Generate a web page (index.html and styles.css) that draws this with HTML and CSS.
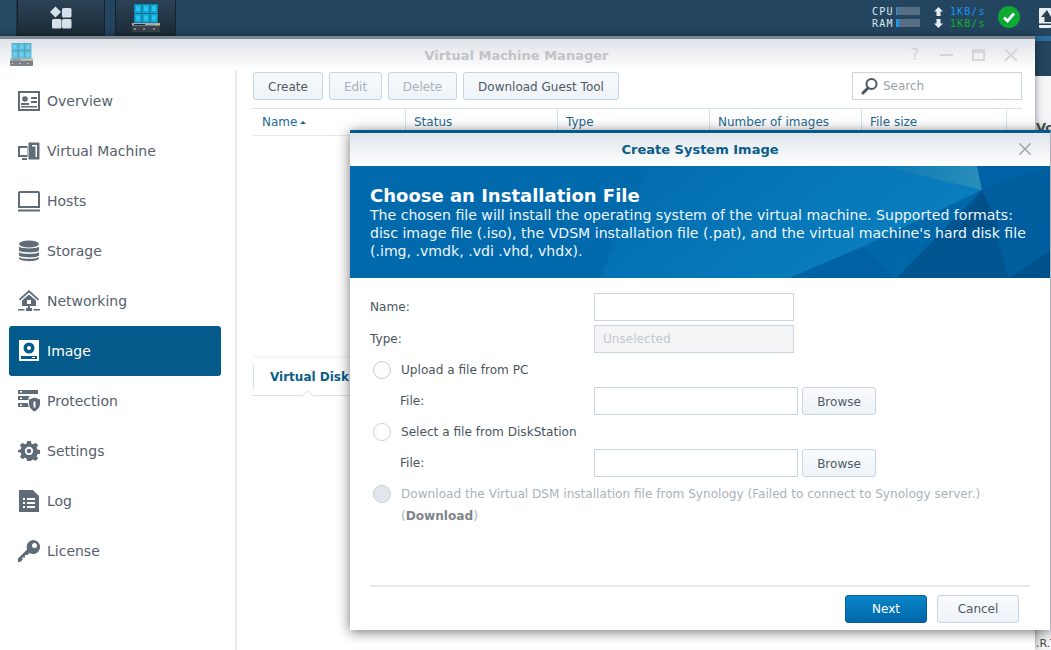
FILE: index.html
```html
<!DOCTYPE html>
<html lang="en">
<head>
<meta charset="utf-8">
<title>Virtual Machine Manager</title>
<link rel="stylesheet" href="styles.css">
</head>
<body>
<svg class="defs" width="0" height="0" aria-hidden="true">
  <defs>
    <symbol id="app" viewBox="0 0 28 28">
      <rect x="2" y="0" width="24" height="19" fill="#0b6f96"/>
      <g fill="#12a6d2">
        <rect x="2.500" y="0.500" width="7" height="8.500"/><rect x="10.500" y="0.500" width="7" height="8.500"/><rect x="18.500" y="0.500" width="7" height="8.500"/>
        <rect x="2.500" y="10" width="7" height="8.500"/><rect x="10.500" y="10" width="7" height="8.500"/><rect x="18.500" y="10" width="7" height="8.500"/>
      </g>
      <g fill="#27c3ea">
        <rect x="4" y="2" width="4" height="5"/><rect x="12" y="2" width="4" height="5"/><rect x="20" y="2" width="4" height="5"/>
        <rect x="4" y="11.500" width="4" height="5"/><rect x="12" y="11.500" width="4" height="5"/><rect x="20" y="11.500" width="4" height="5"/>
      </g>
      <rect x="0" y="19" width="28" height="9" rx="1" fill="#3b434a"/>
      <rect x="0" y="19" width="28" height="2.500" fill="#a4abb0"/>
      <rect x="2" y="20" width="11" height="1" fill="#23282c"/>
      <rect x="23" y="20" width="1.500" height="1.200" fill="#c9d23c"/><rect x="25.500" y="20" width="1.500" height="1.200" fill="#c9d23c"/>
      <rect x="2" y="24.500" width="2" height="1" fill="#c8cdd0"/><rect x="11" y="24.500" width="2" height="1" fill="#c8cdd0"/><rect x="21" y="24.500" width="2" height="1" fill="#c8cdd0"/>
    </symbol>
  </defs>
</svg>

<header class="taskbar">
  <div class="task-spacer"></div>
  <div class="task-tab task-main">
    <svg width="24" height="24" viewBox="0 0 24 24"><path fill="#d5e0e8" d="M6.500 0.500 12 6 6.500 11.500 1 6Z"/><rect x="13" y="2" width="9.500" height="9.500" rx="1.500" fill="#d5e0e8"/><rect x="3" y="13" width="9.500" height="9.500" rx="1.500" fill="#d5e0e8"/><rect x="13" y="13" width="9.500" height="9.500" rx="1.500" fill="#d5e0e8"/></svg>
  </div>
  <div class="task-tab task-app">
    <svg width="28" height="28"><use href="#app"/></svg>
  </div>
  <div class="tray">
    <div class="meters">
      <div class="meter"><span class="meter-name">CPU</span><span class="meter-bar"><i class="meter-fill fill-cpu"></i></span></div>
      <div class="meter"><span class="meter-name">RAM</span><span class="meter-bar"><i class="meter-fill fill-ram"></i></span></div>
    </div>
    <div class="rates">
      <div class="rate rate-up"><svg width="9" height="9" viewBox="0 0 9 9"><path fill="#e6edf2" d="M4.500 0 9 4.500H6.500V9h-4V4.500H0Z"/></svg><span>1KB/s</span></div>
      <div class="rate rate-down"><svg width="9" height="9" viewBox="0 0 9 9"><path fill="#e6edf2" d="M4.500 9 9 4.500H6.500V0h-4v4.500H0Z"/></svg><span>1KB/s</span></div>
    </div>
    <svg class="status" width="22" height="22" viewBox="0 0 22 22"><circle cx="11" cy="11" r="11" fill="#0ea835"/><path d="M6 11.500 9.500 15 16 7.500" fill="none" stroke="#fff" stroke-width="2.800"/></svg>
    <svg class="upload" width="12" height="20" viewBox="0 0 12 20"><rect width="12" height="20" rx="1" fill="#e8eef2"/><path fill="#2a3f52" d="M8 2 2 9h3.500v5H12V9h0Z"/><rect x="0" y="15.500" width="12" height="1.500" fill="#2a3f52"/></svg>
  </div>
</header>

<div class="back-window">
  <div class="back-head"></div>
  <div class="back-body"><span class="back-vo">Vo</span><span class="back-rt">.R.T</span></div>
</div>

<section class="window">
  <div class="win-head">
    <svg class="win-icon" width="23" height="23"><use href="#app"/></svg>
    <div class="win-title">Virtual Machine Manager</div>
    <div class="win-controls">
      <span class="win-help">?</span>
      <svg width="14" height="14" viewBox="0 0 14 14"><rect x="0" y="6" width="13" height="2" fill="#d3d6d9"/></svg>
      <svg width="14" height="14" viewBox="0 0 14 14"><path fill="none" stroke="#d3d6d9" stroke-width="2" d="M1 2h11v10H1z"/><rect x="1" y="2" width="11" height="3" fill="#d3d6d9"/></svg>
      <svg width="14" height="14" viewBox="0 0 14 14"><path stroke="#d3d6d9" stroke-width="1.800" d="M1 1 13 13M13 1 1 13"/></svg>
    </div>
  </div>
  <div class="win-body">
    <nav class="sidebar">
      <a class="nav-item">
        <svg class="nav-icon" viewBox="0 0 22 22"><path fill-rule="evenodd" d="M0 1h22v20H0Zm2 2v16h18V3Z"/><circle cx="7" cy="9" r="2.800"/><path d="M3 13h8v2H3zM13 7h6v2h-6zM13 11h6v2h-6zM3 16h16v1.500H3z"/></svg>
        <span>Overview</span></a>
      <a class="nav-item">
        <svg class="nav-icon" viewBox="0 0 22 22"><path fill-rule="evenodd" d="M0 6h11v11H0Zm2 2v7h7V8Z"/><path d="M4 18h5v2H4z"/><rect x="10" y="2" width="12" height="18" rx="1.500" stroke="#fff" stroke-width="1"/><rect x="14" y="5" width="5" height="1.500" fill="#fff"/><rect x="17.500" y="5" width="1.500" height="12" fill="#fff"/></svg>
        <span>Virtual Machine</span></a>
      <a class="nav-item">
        <svg class="nav-icon" viewBox="0 0 22 22"><path fill-rule="evenodd" d="M2 1h18a2 2 0 0 1 2 2v15H0V3a2 2 0 0 1 2-2Zm0 2v13h18V3Z"/><rect y="19.500" width="22" height="2"/></svg>
        <span>Hosts</span></a>
      <a class="nav-item">
        <svg class="nav-icon" viewBox="0 0 22 22"><ellipse cx="11" cy="4" rx="10" ry="3.500"/><path d="M1 6.500c2 2.500 18 2.500 20 0v4c-2 2.500-18 2.500-20 0ZM1 12c2 2.500 18 2.500 20 0v3.500c-2 2.500-18 2.500-20 0ZM1 17c2 2.500 18 2.500 20 0v1.500c-2 3.500-18 3.500-20 0Z"/></svg>
        <span>Storage</span></a>
      <a class="nav-item">
        <svg class="nav-icon" viewBox="0 0 22 22"><path fill-rule="evenodd" d="M11 0 21 9 20 10.500 11 2.500 2 10.500 1 9ZM11 4.500l7 6V16H4v-5.500ZM9 10v4h4v-4Z"/><path d="M10 16h2v2h-2zM0 19h6.500v1.500H0zM15.500 19H22v1.500h-6.500zM8 18h6v3H8z"/></svg>
        <span>Networking</span></a>
      <a class="nav-item is-active">
        <svg class="nav-icon" viewBox="0 0 22 22"><path fill="#fff" fill-rule="evenodd" d="M1 0h20v21H1Zm10 2.500a5.500 5.500 0 1 0 0 11 5.500 5.500 0 0 0 0-11ZM3 16v3h16v-3Z"/><circle cx="11" cy="8" r="2" fill="#fff"/><rect x="14" y="17" width="3" height="1" fill="#fff"/></svg>
        <span>Image</span></a>
      <a class="nav-item">
        <svg class="nav-icon" viewBox="0 0 22 22"><path fill-rule="evenodd" d="M0 0h20v4H0ZM0 6h12l-1.500 1.500V10H0Zm2 1.500v1.500h2V7.500ZM0 13h10v.5c0 1.500.4 2.700 1 3.500H0Zm2 1.500V16h2v-1.500ZM2 1v1.500h2V1Z"/><path fill-rule="evenodd" d="M16.500 7.500 22 9.500v4c0 4-2.800 6.500-5.500 8-2.700-1.500-5.500-4-5.500-8v-4Zm-1 4v6h2v-6Z"/></svg>
        <span>Protection</span></a>
      <a class="nav-item">
        <svg class="nav-icon" viewBox="-1 -1 24 24"><path fill-rule="evenodd" d="M9 0h4l.6 2.800 2.100.9L18.100 2l2.800 2.800-1.600 2.400.9 2.100 2.800.7v4l-2.800.6-.9 2.100 1.600 2.400-2.800 2.800-2.400-1.600-2.100.8L13 22H9l-.6-2.800-2.100-.9L3.900 20 1.100 17.200l1.600-2.400-.9-2.100L-1 12V10l2.800-.7.9-2.100L1.100 4.800 3.900 2l2.400 1.700 2.100-.9ZM11 6.500a4.500 4.500 0 1 0 0 9 4.500 4.500 0 0 0 0-9Z"/><circle cx="11" cy="11" r="2.500"/></svg>
        <span>Settings</span></a>
      <a class="nav-item">
        <svg class="nav-icon" viewBox="0 0 22 22"><path fill-rule="evenodd" d="M1 0h14l6 6v16H1Zm4 8v2h2V8Zm4 0v2h8V8Zm-4 4v2h2v-2Zm4 0v2h8v-2Zm-4 4v2h2v-2Zm4 0v2h8v-2Z"/></svg>
        <span>Log</span></a>
      <a class="nav-item">
        <svg class="nav-icon" viewBox="0 0 22 22"><path fill-rule="evenodd" d="M15 0a7 7 0 1 1-3.500 13L9.500 15H7v2.500H4.500V20L2 22H0v-3.500L9 9.500A7 7 0 0 1 15 0Zm1.500 3a2.500 2.500 0 1 0 0 5 2.500 2.500 0 0 0 0-5Z"/></svg>
        <span>License</span></a>
    </nav>
    <main class="content">
      <div class="toolbar">
        <button class="btn w-create">Create</button>
        <button class="btn btn-off w-edit">Edit</button>
        <button class="btn btn-off w-delete">Delete</button>
        <button class="btn w-guest">Download Guest Tool</button>
        <div class="search">
          <svg width="18" height="18" viewBox="0 0 18 18"><circle cx="10.500" cy="7" r="5" fill="none" stroke="#4d5762" stroke-width="2"/><path d="M7 11 2 16" stroke="#4d5762" stroke-width="3" stroke-linecap="round"/></svg>
          <span>Search</span>
        </div>
      </div>
      <div class="table-head">
        <div class="col col-name">Name <i class="sort"></i></div>
        <div class="col">Status</div>
        <div class="col">Type</div>
        <div class="col">Number of images</div>
        <div class="col">File size</div>
      </div>
      <div class="table-empty"></div>
      <div class="tabs">
        <div class="tab">Virtual Disk<i class="tab-notch"></i></div>
      </div>
    </main>
  </div>
</section>

<section class="dialog">
  <div class="dlg-head">
    <div class="dlg-title">Create System Image</div>
    <svg class="dlg-close" width="14" height="14" viewBox="0 0 14 14"><path stroke="#9aa1a6" stroke-width="1.500" d="M1.500 1.500 12.500 12.500M12.500 1.500 1.500 12.500"/></svg>
  </div>
  <div class="banner">
    <svg class="banner-art" viewBox="0 0 701 112" preserveAspectRatio="none" aria-hidden="true">
      <defs>
        <linearGradient id="glow" x1="0" y1="0" x2="1" y2="0.400"><stop offset="0" stop-color="#016aad"/><stop offset="1" stop-color="#0a80bf"/></linearGradient>
        <linearGradient id="ray" x1="0" y1="0" x2="1" y2="0"><stop offset="0" stop-color="#0a78b5"/><stop offset="1" stop-color="#2a8fb8"/></linearGradient>
      </defs>
      <polygon points="300,0 530,0 633,24 513,81 440,112 250,112" fill="url(#glow)"/>
      <polygon points="530,0 628,0 633,24" fill="url(#ray)"/>
      <polygon points="628,0 701,0 633,24" fill="#0062a4"/>
      <polygon points="633,24 701,0 701,112 660,112" fill="#005e9e"/>
      <polygon points="633,24 660,112 547,112" fill="#005590"/>
      <polygon points="633,24 547,112 513,81" fill="#0068a8"/>
      <polygon points="633,24 612,62 650,62" fill="#004a80" opacity=".6"/>
      <polygon points="513,81 547,112 440,112" fill="#0061a3"/>
      <polygon points="660,112 701,112 701,85" fill="#00528c"/>
    </svg>
    <h1 class="banner-title">Choose an Installation File</h1>
    <p class="banner-text">The chosen file will install the operating system of the virtual machine. Supported formats: disc image file (.iso), the VDSM installation file (.pat), and the virtual machine's hard disk file (.img, .vmdk, .vdi .vhd, vhdx).</p>
  </div>
  <form class="form">
    <div class="row"><label class="lbl">Name:</label><div class="input"></div></div>
    <div class="row"><label class="lbl">Type:</label><div class="input input-off">Unselected</div></div>
    <div class="radio-row"><i class="radio"></i><span>Upload a file from PC</span></div>
    <div class="row"><label class="lbl lbl-sub">File:</label><div class="input input-file"></div><button type="button" class="btn btn-browse">Browse</button></div>
    <div class="radio-row"><i class="radio"></i><span>Select a file from DiskStation</span></div>
    <div class="row"><label class="lbl lbl-sub">File:</label><div class="input input-file"></div><button type="button" class="btn btn-browse">Browse</button></div>
    <div class="radio-row radio-off"><i class="radio"></i><span>Download the Virtual DSM installation file from Synology (Failed to connect to Synology server.) (<b>Download</b>)</span></div>
  </form>
  <div class="dlg-foot">
    <button class="btn btn-primary">Next</button>
    <button class="btn btn-cancel">Cancel</button>
  </div>
</section>
</body>
</html>
```
FILE: styles.css
```css
* { box-sizing: border-box; }
html, body { margin: 0; height: 100%; }
body {
  position: relative;
  width: 1051px;
  height: 650px;
  overflow: hidden;
  background: #fff;
  font-family: "DejaVu Sans", sans-serif;
  font-size: 13px;
  color: #4a5560;
}
.defs { position: absolute; }

/* taskbar */
.taskbar {
  height: 36px;
  display: flex;
  background: #24455f;
}
.task-spacer { width: 17px; border-right: 1px solid #1c3346; background: #264a64; }
.task-tab {
  display: flex;
  align-items: center;
  justify-content: center;
  background: linear-gradient(#2b4256, #1c2b38);
  border-right: 1px solid #16232e;
  border-left: 1px solid #16232e;
  height: 36px;
}
.task-main { width: 88px; }
.task-app { width: 61px; margin-left: 10px; }
.tray { margin-left: auto; display: flex; align-items: center; height: 36px; padding-bottom: 2px; }
.meters { display: flex; flex-direction: column; gap: 3px; width: 48px; }
.meter { display: flex; align-items: center; height: 9px; }
.meter-name { width: 24px; font: 10px/9px "DejaVu Sans Mono", monospace; color: #dce6ee; letter-spacing: 1.200px; white-space: nowrap; }
.meter-bar { width: 24px; height: 8px; background: #566f84; display: block; }
.meter-fill { display: block; height: 8px; background: #1e95ea; }
.fill-cpu { width: 1px; }
.fill-ram { width: 3px; }
.rates { display: flex; flex-direction: column; gap: 3px; margin-left: 14px; width: 63px; }
.rate { display: flex; align-items: center; gap: 7px; height: 9px; font: 10px/9px "DejaVu Sans Mono", monospace; letter-spacing: 1.100px; }
.rate-up span { color: #1b93f0; }
.rate-down span { color: #14b02e; }
.status { margin-left: 1px; }
.upload { margin-left: 19px; margin-top: 1px; }

/* window behind */
.back-window {
  position: absolute;
  left: 1035px; top: 36px;
  width: 16px; height: 614px;
  display: flex; flex-direction: column;
}
.back-head { height: 40px; background: linear-gradient(#2d6c9c 0, #2d6c9c 5px, #24455f 5px); }
.back-body { flex: 1; position: relative; background: #f4f6f8; overflow: hidden; font-weight: 700; color: #444; }
.back-vo { position: absolute; left: 1px; top: 44px; color: #4a4f55; }
.back-rt { position: absolute; left: 1px; bottom: 0; font-weight: 400; font-size: 11px; line-height: 13px; }

/* main window */
.window {
  position: absolute;
  left: 0; top: 36px;
  width: 1035px; height: 614px;
  background: #fff;
  box-shadow: 0 0 8px rgba(0, 0, 0, .45);
  border-top: 3px solid #7c8893;
  display: flex;
  flex-direction: column;
}
.win-head {
  height: 32px;
  position: relative;
  display: flex;
  align-items: center;
  justify-content: center;
  padding-right: 2px;
  background: linear-gradient(#dfe3e8, #fff);
}
.win-icon { position: absolute; left: 10px; top: 4px; opacity: .65; }
.win-title { font-weight: 700; color: #c0c4c8; }
.win-controls {
  position: absolute; right: 17px; top: 9px;
  display: flex; gap: 18px; align-items: center;
}
.win-help { width: 14px; color: #d3d6d9; font-size: 16px; line-height: 14px; text-align: center; }
.win-body { flex: 1; display: flex; min-height: 0; }

/* sidebar */
.sidebar {
  width: 237px;
  padding: 5px 14px 0 9px;
  border-right: 2px solid #e6e9ec;
  display: flex;
  flex-direction: column;
}
.nav-item {
  height: 50px;
  display: flex;
  align-items: center;
  gap: 7px;
  padding-left: 9px;
  border-radius: 3px;
  font-size: 14px;
  color: #56616c;
}
.nav-icon { width: 22px; height: 22px; fill: #5f6b77; flex: none; overflow: visible; }
.is-active { background: #045a8a; color: #fff; }

/* content */
.content { flex: 1; padding: 0 13px 0 16px; display: flex; flex-direction: column; min-width: 0; }
.toolbar { display: flex; gap: 6px; height: 37px; padding-top: 1px; align-items: flex-start; }
.btn {
  height: 28px;
  padding: 1px 0 0;
  border: 1px solid #c5d5e2;
  border-radius: 3px;
  background: linear-gradient(#f8fafc, #eef3f8);
  font: 12px "DejaVu Sans", sans-serif;
  color: #4f5a65;
}
.btn-off { color: #aab2ba; }
.w-create { width: 70px; }
.w-edit { width: 53px; }
.w-delete { width: 69px; }
.w-guest { width: 156px; }
.search {
  margin-left: auto;
  width: 170px; height: 28px;
  border: 1px solid #c9d6e0;
  display: flex; align-items: center; gap: 4px;
  padding-left: 8px;
  font-size: 12px;
  color: #9aa3ab;
}
.table-head {
  display: grid;
  grid-template-columns: 153px 152px 152px 152px 145px;
  height: 28px;
  border-top: 1px solid #d5e2ec;
  border-bottom: 1px solid #e3e8ed;
  color: #1f6a94;
  font-size: 12px;
}
.col { padding-left: 8px; line-height: 26px; border-right: 1px solid #d5e2ec; }
.col-name { padding-left: 9px; }
.sort {
  display: inline-block;
  vertical-align: 2px;
  margin-left: -1px;
  border: 3px solid transparent;
  border-top: 0;
  border-bottom: 3px solid #1f6a94;
}
.table-empty { height: 222px; }
.tabs {
  height: 38px;
  box-shadow: 0 -2px 3px rgba(0, 0, 0, .05);
  border-bottom: 1px solid #dfe2e5;
  display: flex;
  align-items: center;
}
.tab {
  position: relative;
  height: 24px;
  display: flex; align-items: center;
  padding: 0 16px;
  border-left: 1px solid #d5e2ec;
  font-size: 12px;
  font-weight: 700;
  color: #0b5d8a;
  white-space: nowrap;
}
.tab-notch {
  position: absolute; left: 49px; bottom: -12px;
  width: 9px; height: 9px;
  background: #fff;
  border-left: 1px solid #dfe2e5;
  border-top: 1px solid #dfe2e5;
  transform: rotate(45deg);
}

/* dialog */
.dialog {
  position: absolute;
  left: 350px; top: 130px;
  width: 701px; height: 500px;
  background: #fff;
  border-top: 3px solid #045a8a;
  border-right: 1px solid #aeb2b6;
  box-shadow: 0 2px 12px rgba(0, 0, 0, .55);
  display: flex;
  flex-direction: column;
}
.dlg-head {
  height: 33px;
  position: relative;
  display: flex; align-items: center; justify-content: center;
  background: linear-gradient(#dfe5ec, #fff);
}
.dlg-title { font-weight: 700; color: #0b5d8a; }
.dlg-close { position: absolute; right: 18px; top: 9px; }
.banner {
  position: relative;
  height: 112px;
  padding: 20px 20px 0;
  background: #016aad;
  color: #eef6fb;
  overflow: hidden;
}
.banner-art { position: absolute; left: 0; top: 0; width: 100%; height: 100%; }
.banner-title { position: relative; margin: 0; font-size: 18px; line-height: 20px; font-weight: 700; color: #fff; }
.banner-text { position: relative; margin: 0; line-height: 18px; font-size: 14.100px; }
.form {
  flex: 1;
  padding: 15px 20px 0;
  display: flex;
  flex-direction: column;
  gap: 4px;
  font-size: 12.100px;
}
.row { display: flex; align-items: center; height: 28px; }
.lbl { width: 224px; flex: none; }
.lbl-sub { padding-left: 30px; }
.input {
  width: 200px; height: 28px;
  border: 1px solid #c9d6e0;
  background: #fff;
  padding-left: 8px;
  line-height: 26px;
}
.input-off { background: #f3f5f7; color: #c2c8ce; }
.input-file { width: 204px; }
.btn-browse { width: 74px; margin-left: 4px; }
.radio-row { display: flex; align-items: flex-start; min-height: 26px; line-height: 22px; padding-top: 2px; }
.radio {
  flex: none;
  width: 18px; height: 18px;
  margin: 2px 10px 0 3px;
  border: 1px solid #c3d0db;
  border-radius: 50%;
  background: #fff;
}
.radio-off { color: #aab2ba; }
.radio-off .radio { background: #e0e6ec; }
.radio-off b { color: #7d858d; }
.dlg-foot {
  height: 45px;
  margin: 0 20px;
  padding: 8px 11px 0 0;
  border-top: 2px solid #e6e8ea;
  display: flex; justify-content: flex-end; gap: 10px;
}
.btn-primary {
  width: 82px;
  padding-top: 0;
  border-color: #0a5f96;
  background: linear-gradient(#0886c8, #0066aa);
  color: #fff;
}
.btn-cancel { width: 82px; padding-top: 0; }
```
